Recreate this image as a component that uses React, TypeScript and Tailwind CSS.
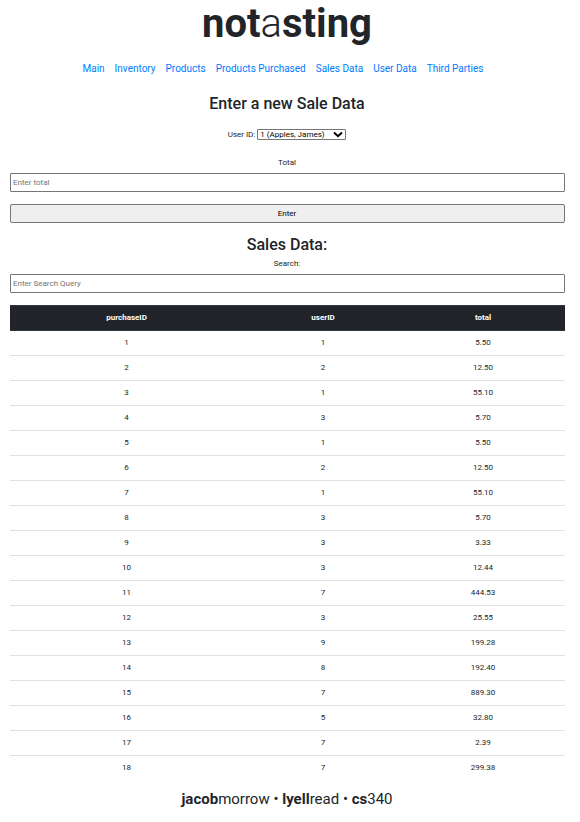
const links = ['Main', 'Inventory', 'Products', 'Products Purchased', 'Sales Data', 'User Data', 'Third Parties'];

const sales: [number, number, string][] = [
  [1, 1, '5.50'],
  [2, 2, '12.50'],
  [3, 1, '55.10'],
  [4, 3, '5.70'],
  [5, 1, '5.50'],
  [6, 2, '12.50'],
  [7, 1, '55.10'],
  [8, 3, '5.70'],
  [9, 3, '3.33'],
  [10, 3, '12.44'],
  [11, 7, '444.53'],
  [12, 3, '25.55'],
  [13, 9, '199.28'],
  [14, 8, '192.40'],
  [15, 7, '889.30'],
  [16, 5, '32.80'],
  [17, 7, '2.39'],
  [18, 7, '299.38'],
];

const field =
  'block h-[19px] w-full rounded-[1px] border border-[#767676] bg-white px-0.5 text-[8px] placeholder:text-[#757575]';

const headCell = 'border-y border-[#32383e] font-bold';

export default function App() {
  return (
    <div className="pr-[15px] pl-2.5 text-center font-[Roboto,sans-serif] text-[8px] leading-3 text-[#212529]">
      <header>
        <h1 className="pr-px text-[40px] leading-12 font-bold">
          not<span className="font-light">a</span>sting
        </h1>
        <nav className="mt-[13px] flex justify-center gap-2.5 pr-[9px] text-[10px] leading-4 text-[#007bff]">
          {links.map((label) => (
            <a key={label} href="#">
              {label}
            </a>
          ))}
        </nav>
      </header>

      <main>
        <form onSubmit={(e) => e.preventDefault()}>
          <h2 className="mt-[17px] pr-px text-base leading-5 font-medium">Enter a new Sale Data</h2>
          <div className="mt-[15px] flex items-start justify-center gap-0.5 pr-px">
            <label htmlFor="user">User ID:</label>
            <div className="relative flex">
              <select
                id="user"
                className="h-[11px] w-[89px] appearance-none rounded-[1px] border border-[#767676] bg-white pl-0.5 text-[8px] leading-[9px] text-black"
              >
                <option>1 (Apples, James)</option>
              </select>
              <svg
                viewBox="0 0 10 7"
                className="pointer-events-none absolute top-0.5 right-[3px] h-[7px] w-2.5"
                fill="none"
                stroke="#000"
                strokeWidth="2"
              >
                <path d="M1 1.5 5 5.2 9 1.5" />
              </svg>
            </div>
          </div>
          <label htmlFor="total" className="mt-4 block pr-px">
            Total
          </label>
          <input id="total" type="text" placeholder="Enter total" className={`mt-1 ${field}`} />
          <button type="submit" className="mt-3 block h-[19px] w-full rounded-[2px] border border-[#767676] bg-[#efefef] pr-px text-black">
            Enter
          </button>
        </form>

        <h2 className="mt-3 pr-px text-base leading-5 font-medium">Sales Data:</h2>
        <label htmlFor="search" className="mt-[3px] block pr-px">
          Search:
        </label>
        <input id="search" type="text" placeholder="Enter Search Query" className={`mt-1 ${field}`} />

        <table className="mt-3 w-full table-fixed border-collapse">
          <colgroup>
            <col className="w-[42%]" />
            <col className="w-[29%]" />
            <col className="w-[29%]" />
          </colgroup>
          <thead className="bg-[#212529] text-white">
            <tr className="h-[25px]">
              <th className={headCell}>purchaseID</th>
              <th className={`pr-px ${headCell}`}>userID</th>
              <th className={`pr-[3px] ${headCell}`}>total</th>
            </tr>
          </thead>
          <tbody>
            {sales.map(([id, user, total]) => (
              <tr key={id} className="h-[25px] border-b border-[#dee2e6] last:border-b-0">
                <td>{id}</td>
                <td className="pr-px">{user}</td>
                <td className="pr-[3px]">{total}</td>
              </tr>
            ))}
          </tbody>
        </table>
      </main>

      <footer className="mt-1.5 pr-px text-[15px] leading-6">
        <b>jacob</b>morrow • <b>lyell</b>read • <b>cs</b>340
      </footer>
    </div>
  );
}
